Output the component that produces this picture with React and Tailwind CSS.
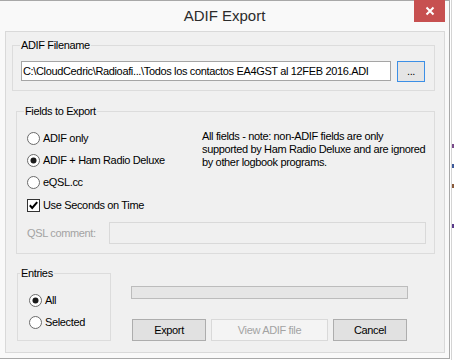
import React from "react";

const Radio = ({ checked }) => (
  <svg width="13" height="13" viewBox="0 0 13 13" className="shrink-0">
    <circle cx="6.5" cy="6.5" r="6" fill="#ffffff" stroke="#6a6a6a" />
    {checked && <circle cx="6.5" cy="6.5" r="3" fill="#1a1a1a" />}
  </svg>
);

const Check = () => (
  <svg width="13" height="13" viewBox="0 0 13 13" className="shrink-0">
    <rect x="0.5" y="0.5" width="12" height="12" fill="#ffffff" stroke="#333333" />
    <path d="M2.8 6.3 L5.2 8.9 L10.2 3.2" stroke="#000000" strokeWidth="2" fill="none" />
  </svg>
);

const Group = ({ label, labelClass, className, children }) => (
  <div className={"relative border border-[#dcdcdc] " + className}>
    <span className={"absolute -top-[7px] px-[1px] bg-[#f0f0f0] leading-[13px] " + labelClass}>
      {label}
    </span>
    {children}
  </div>
);

export default function App() {
  return (
    <div className="w-[454px] h-[360px] bg-white flex overflow-hidden font-['Liberation_Sans',Arial,sans-serif] text-[11px] text-black">
      <div className="w-[450px] h-[359px] shrink-0 bg-[#f9f9f9] border-t border-r border-b border-[#a8a8a8] flex flex-col">
        <div className="h-[30px] relative flex items-center justify-center">
          <span className="text-[15px] text-[#2b2b2b] pt-[1px]">ADIF Export</span>
          <div className="absolute right-[4px] -top-[1px] w-[31px] h-[22px] bg-[#c75050] flex items-center justify-center">
            <svg width="10" height="10" viewBox="0 0 10 10">
              <path d="M1.5 1.5 L8.5 8.5 M8.5 1.5 L1.5 8.5" stroke="#ffffff" strokeWidth="2" />
            </svg>
          </div>
        </div>
        <div className="ml-[5px] w-[440px] h-[322px] border border-[#d9d9d9] bg-[#f0f0f0] flex flex-col tracking-[-0.35px]">
          <Group label="ADIF Filename" labelClass="left-[7px]" className="ml-[6px] mt-[13px] w-[423px] h-[46px] shrink-0">
            <div className="flex items-start pt-[15px] pl-[8px] gap-[6px]">
              <div className="w-[370px] h-[20px] border border-[#a5a5a5] bg-white flex items-center pl-[1px] whitespace-nowrap overflow-hidden">
                {"C:\\CloudCedric\\Radioafi...\\Todos los contactos EA4GST al 12FEB 2016.ADI"}
              </div>
              <div className="w-[28px] h-[21px] border border-[#3c8fe6] bg-[#e5e5e5] flex items-center justify-center leading-none">
                ...
              </div>
            </div>
          </Group>

          <Group label="Fields to Export" labelClass="left-[7px]" className="ml-[10px] mt-[20px] w-[419px] h-[143px] shrink-0">
            <div className="pt-[15px] pl-[10px] flex flex-col">
              <div className="flex">
                <div className="w-[175px] flex flex-col">
                  <div className="h-[22px] flex items-center gap-[3px]">
                    <Radio />
                    <span>ADIF only</span>
                  </div>
                  <div className="h-[22px] flex items-center gap-[3px]">
                    <Radio checked />
                    <span>ADIF + Ham Radio Deluxe</span>
                  </div>
                  <div className="h-[22px] flex items-center gap-[3px]">
                    <Radio />
                    <span>eQSL.cc</span>
                  </div>
                  <div className="h-[22px] mt-[1px] flex items-center gap-[3px]">
                    <Check />
                    <span>Use Seconds on Time</span>
                  </div>
                </div>
                <div className="pt-[3px] leading-[13px] whitespace-nowrap">
                  All fields - note: non-ADIF fields are only
                  <br />
                  supported by Ham Radio Deluxe and are ignored
                  <br />
                  by other logbook programs.
                </div>
              </div>
              <div className="mt-[6px] flex items-center">
                <span className="w-[82px] text-[#a3a3a3]">QSL comment:</span>
                <div className="w-[317px] h-[22px] border border-[#d9d9d9] bg-[#f0f0f0]" />
              </div>
            </div>
          </Group>

          <div className="flex ml-[11px] mt-[19px]">
            <Group label="Entries" labelClass="left-[2px]" className="w-[94px] h-[68px] shrink-0">
              <div className="pt-[15px] pl-[11px] flex flex-col">
                <div className="h-[22px] flex items-center gap-[3px]">
                  <Radio checked />
                  <span>All</span>
                </div>
                <div className="h-[22px] flex items-center gap-[3px]">
                  <Radio />
                  <span>Selected</span>
                </div>
              </div>
            </Group>
            <div className="ml-[20px] pt-[13px] flex flex-col">
              <div className="w-[277px] h-[13px] border border-[#bcbcbc] bg-[#e6e6e6]" />
              <div className="mt-[20px] ml-[1px] flex gap-[5px]">
                <div className="w-[74px] h-[22px] border border-[#adadad] bg-[#e1e1e1] flex items-center justify-center">
                  Export
                </div>
                <div className="w-[117px] h-[22px] border border-[#d9d9d9] bg-[#f4f4f4] text-[#a3a3a3] flex items-center justify-center">
                  View ADIF file
                </div>
                <div className="w-[74px] h-[22px] border border-[#adadad] bg-[#e1e1e1] flex items-center justify-center">
                  Cancel
                </div>
              </div>
            </div>
          </div>
        </div>
      </div>
      <div className="w-[4px] h-[360px] shrink-0 flex">
        <div className="w-[1px] bg-white" />
        <div className="w-[1px] bg-[#d4d4d4]" />
        <div className="w-[2px] bg-white flex flex-col">
          <div className="h-[144px]" />
          <div className="h-[4px] bg-[#7a4a8a]" />
          <div className="h-[16px]" />
          <div className="h-[4px] bg-[#3d5a9a]" />
          <div className="h-[16px]" />
          <div className="h-[4px] bg-[#8a5a3a]" />
          <div className="h-[36px]" />
          <div className="h-[4px] bg-[#5a3a8a]" />
        </div>
      </div>
    </div>
  );
}
